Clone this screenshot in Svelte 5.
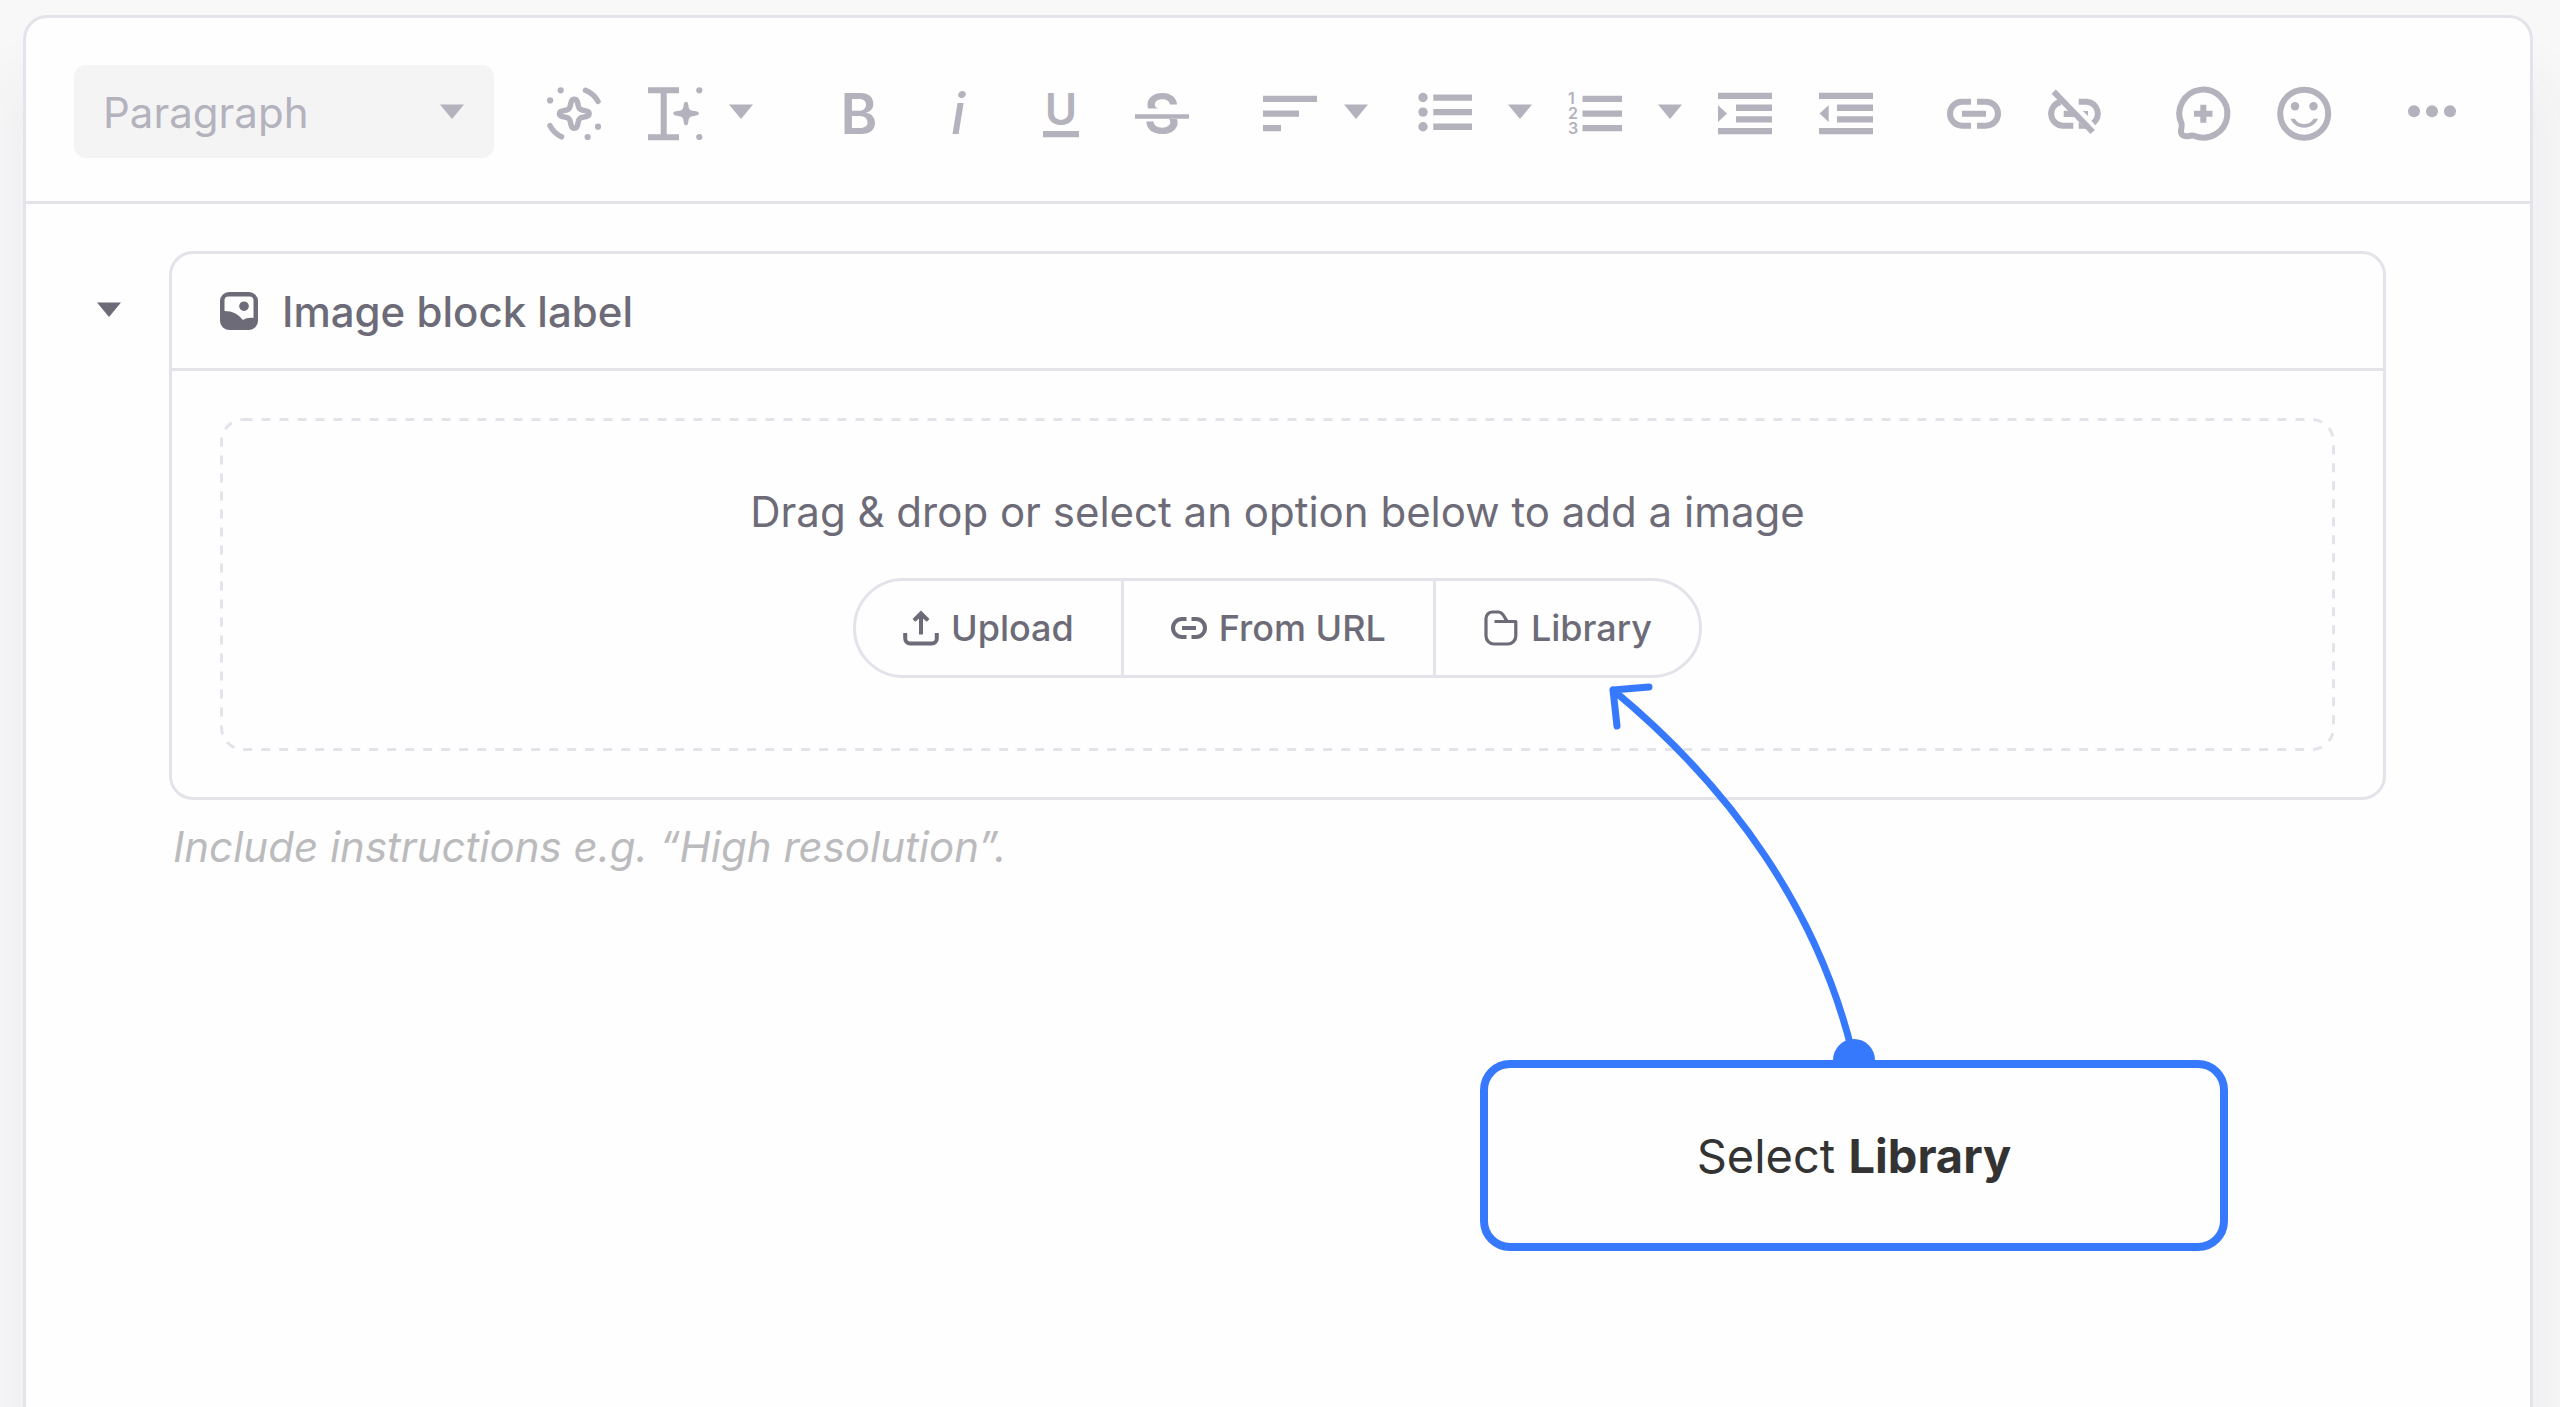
<script>
    let style = $state('Paragraph');
    let open = $state(true);

    const styles = ['Paragraph', 'Heading 1', 'Heading 2', 'Heading 3'];
</script>

{#snippet caret()}
    <svg class="caret" viewBox="0 0 24 15" aria-hidden="true"><path d="M0 0.5h24L12 15z" /></svg>
{/snippet}

{#snippet menu(label)}
    <button class="menu" aria-label={label}>{@render caret()}</button>
{/snippet}

<main>
    <section class="panel">
        <div class="toolbar" role="toolbar" aria-label="Formatting">
            <label class="picker">
                <select bind:value={style} aria-label="Text style">
                    {#each styles as name}
                        <option>{name}</option>
                    {/each}
                </select>
                {@render caret()}
            </label>

            <div class="group assist">
                <button class="tool" aria-label="AI assist">
                    <svg viewBox="0 0 54 59">
                        <g class="line round">
                            <path d="M38.5 8.3A26 26 0 0 1 51 19.3M3 43.7A26 26 0 0 0 14.5 54.8" />
                            <path d="M27.3 17.2c2.6 0 3.2 2.6 3.9 6.2.7 3.3 1.6 4.2 4.6 4.8 3.6.8 6.3 1.1 6.3 3.5s-2.7 2.8-6.3 3.6c-3 .6-3.9 1.5-4.6 4.8-.7 3.6-1.3 6.2-3.9 6.2s-3.2-2.6-3.9-6.2c-.7-3.3-1.6-4.2-4.6-4.8-3.6-.8-6.3-1.2-6.3-3.6s2.7-2.7 6.3-3.5c3-.6 3.9-1.5 4.6-4.8.7-3.6 1.3-6.2 3.9-6.2z" />
                        </g>
                        <circle cx="13.7" cy="8.3" r="3.1" />
                        <circle cx="3.1" cy="18.4" r="3.1" />
                        <circle cx="51" cy="44.7" r="3.1" />
                        <circle cx="40.6" cy="55" r="3.1" />
                    </svg>
                </button>
                <div class="split">
                    <button class="tool" aria-label="Insert text with AI">
                        <svg viewBox="0 0 54 59">
                            <path d="M0 5.3h31v6H18.7v41H31v6H0v-6h12.7v-41H0z" />
                            <path d="M38 19.8c1.4 0 2 1 2.3 3.2.6 4.6 1.3 5.4 5.8 6 3.2.4 4.8 1 4.8 2.4s-1.6 2-4.8 2.5c-4.5.6-5.2 1.3-5.8 6-.3 2.3-.9 3.4-2.3 3.4s-2-1.1-2.3-3.4c-.6-4.7-1.3-5.4-5.8-6-3.2-.5-4.6-1.1-4.6-2.5s1.4-2 4.6-2.4c4.5-.6 5.2-1.4 5.8-6 .3-2.2.9-3.2 2.3-3.2z" />
                            <circle cx="51.3" cy="8.3" r="3.1" />
                            <circle cx="51.3" cy="55" r="3.1" />
                        </svg>
                    </button>
                    {@render menu('More AI options')}
                </div>
            </div>

            <div class="group marks">
                <button class="tool" aria-label="Bold">
                    <svg viewBox="0 0 54 59"><text x="27" y="52" class="glyph">B</text></svg>
                </button>
                <button class="tool" aria-label="Italic">
                    <svg viewBox="0 0 54 59"><text x="25" y="52" class="glyph italic">i</text></svg>
                </button>
                <button class="tool" aria-label="Underline">
                    <svg viewBox="0 0 54 59">
                        <text x="27" y="43" class="glyph under">U</text>
                        <path d="M9 49h36v6.3H9z" />
                    </svg>
                </button>
                <button class="tool" aria-label="Strikethrough">
                    <svg viewBox="0 0 54 59">
                        <text x="27" y="52" class="glyph">S</text>
                        <path class="gap" d="M6 26.5h42V37H6z" />
                        <path d="M0 32.3h54v4.4H0z" />
                    </svg>
                </button>
            </div>

            <div class="group">
                <div class="split">
                    <button class="tool" aria-label="Align">
                        <svg viewBox="0 0 54 59"><path d="M0 13.7h54V20H0zM0 28.4h36v6.3H0zM0 43h18v6.3H0z" /></svg>
                    </button>
                    {@render menu('Alignment options')}
                </div>
            </div>

            <div class="group lists">
                <button class="tool" aria-label="Bulleted list">
                    <svg viewBox="0 0 54 59">
                        <circle cx="5" cy="15.5" r="4.7" />
                        <circle cx="5" cy="30.1" r="4.7" />
                        <circle cx="5" cy="44.7" r="4.7" />
                        <path d="M15.3 12.4H54v6.3H15.3zM15.3 27H54v6.3H15.3zM15.3 41.6H54v6.3H15.3z" />
                    </svg>
                </button>
                {@render menu('Bulleted list options')}
                <button class="tool" aria-label="Numbered list">
                    <svg viewBox="0 0 54 59">
                        <text x="0" y="22" class="digit">1</text>
                        <text x="0" y="37" class="digit">2</text>
                        <text x="0" y="52" class="digit">3</text>
                        <path d="M14.5 13.7H54V20H14.5zM14.5 28.4H54v6.3H14.5zM14.5 43H54v6.3H14.5z" />
                    </svg>
                </button>
                {@render menu('Numbered list options')}
                <div class="group indents">
                    <button class="tool" aria-label="Increase indent">
                        <svg viewBox="0 0 54 59"><path d="M0 10.8h54v6.3H0zM18 22.6h36v6.3H18zM18 34.3h36v6.3H18zM0 46h54v6.3H0zM0 23.3l9 8.3-9 8.4z" /></svg>
                    </button>
                    <button class="tool" aria-label="Decrease indent">
                        <svg viewBox="0 0 54 59"><path d="M0 10.8h54v6.3H0zM18 22.6h36v6.3H18zM18 34.3h36v6.3H18zM0 46h54v6.3H0zM9.7 23.3L.5 31.6l9.2 8.4z" /></svg>
                    </button>
                </div>
            </div>

            <div class="group">
                <button class="tool" aria-label="Insert link">
                    <svg viewBox="0 0 54 59">
                        <path class="line" d="M24 19.7h-9a12 12 0 0 0 0 24h9M30 19.7h9a12 12 0 0 1 0 24h-9M15 31.7h24" />
                    </svg>
                </button>
                <button class="tool" aria-label="Remove link">
                    <svg viewBox="0 0 54 59">
                        <path class="line" d="M12.5 20a12 12 0 0 0 2.5 23.7h10.3M30.7 19.7H39a12 12 0 0 1 6.3 21.3" />
                        <path class="line" d="M5.7 9.7l39 40.3" />
                        <path d="M15.7 28.7h9l6 6.3h-15zM34.7 29H40v5zM30.7 40.3l8.3 6.4h-8.3z" />
                    </svg>
                </button>
            </div>

            <div class="group">
                <button class="tool" aria-label="Add comment">
                    <svg viewBox="0 0 54 59">
                        <path class="line" d="M5.5 41.5A24 24 0 1 1 18 53.7c-1.5-.6-2.5-.3-4 .1-5 1.3-9.5 0-9-5.3.2-2.5 1.4-4.5.5-7z" />
                        <path class="line" d="M18 31.7h18.5M27.3 22.7v18" />
                    </svg>
                </button>
                <button class="tool" aria-label="Insert emoji">
                    <svg viewBox="0 0 54 59">
                        <circle class="line" cx="27.2" cy="31.7" r="24" />
                        <circle cx="18" cy="24.3" r="4.2" />
                        <circle cx="36.5" cy="24.3" r="4.2" />
                        <path d="M13.5 36.7h4.3c1.9 3.3 5.3 5.4 9.4 5.4s7.5-2.1 9.4-5.4h4.3c-2.2 5.4-7.5 9-13.7 9s-11.5-3.6-13.7-9z" />
                    </svg>
                </button>
            </div>

            <div class="group">
                <button class="tool" aria-label="More">
                    <svg viewBox="0 0 54 59">
                        <circle cx="9" cy="29.3" r="6" />
                        <circle cx="27" cy="29.3" r="6" />
                        <circle cx="45" cy="29.3" r="6" />
                    </svg>
                </button>
            </div>
        </div>

        <div class="content">
            <button class="menu toggle" aria-label="Toggle block" aria-expanded={open} onclick={() => (open = !open)}>
                {@render caret()}
            </button>
            <div class="field">
                <div class="block">
                    <header>
                        <svg class="image-icon" viewBox="0 0 38 38" aria-hidden="true">
                            <path fill-rule="evenodd" d="M9 0h20a9 9 0 0 1 9 9v20a9 9 0 0 1-9 9H9a9 9 0 0 1-9-9V9a9 9 0 0 1 9-9zM8.5 4.5a4 4 0 0 0-4 4V19c8 0 13.5 3 18.5 9 3-2 6.5-2.5 10.5-2V8.5a4 4 0 0 0-4-4z" />
                            <circle cx="24" cy="14.2" r="4.8" />
                        </svg>
                        <h2>Image block label</h2>
                    </header>
                    {#if open}
                        <div class="body">
                            <div class="dropzone">
                                <svg class="dashes" aria-hidden="true"><rect rx="22" /></svg>
                                <p>Drag &amp; drop or select an option below to add a image</p>
                                <div class="sources">
                                    <button>
                                        <svg viewBox="0 0 36 36" aria-hidden="true">
                                            <path class="line bold" d="M2.2 23v5.5a5 5 0 0 0 5 5h21.6a5 5 0 0 0 5-5V23M18 24.5V4" />
                                            <path d="M18 .5l8.500 8.500-2.700 2.700L18 7l-5.800 4.700L9.500 9z" />
                                        </svg>
                                        Upload
                                    </button>
                                    <button>
                                        <svg viewBox="0 0 36 36" aria-hidden="true">
                                            <path class="line bold" d="M15.5 9H11a9 9 0 0 0 0 18h4.5M20.5 9H25a9 9 0 0 1 0 18h-4.5M11 18h14" />
                                        </svg>
                                        From URL
                                    </button>
                                    <button>
                                        <svg viewBox="0 0 36 36" aria-hidden="true">
                                            <path class="line thin" d="M11.5 11.5h21.3V26a8 8 0 0 1-8 8H11a8 8 0 0 1-8-8V8.5A6.5 6.5 0 0 1 9.5 2h6c4.5 0 5.5 5 8.5 9" />
                                        </svg>
                                        Library
                                    </button>
                                </div>
                            </div>
                        </div>
                    {/if}
                </div>
                <p class="hint">Include instructions e.g. “High resolution”.</p>
            </div>
        </div>
    </section>

    <aside class="callout">
        <svg class="arrow" viewBox="0 0 270 380" aria-hidden="true">
            <path d="M7 9C129 110 212 232 246 370M43 6L7 9l4 36" />
            <circle cx="248" cy="379" r="21" />
        </svg>
        <p>Select <b>Library</b></p>
    </aside>
</main>

<style>
    :global(body) {
        background: #f8f8f8;
    }

    main {
        position: relative;
        box-sizing: border-box;
        min-height: 100vh;
        padding: 15px 27px 0 23px;
        display: flex;
        overflow: hidden;
        font-family: Inter, "Liberation Sans", sans-serif;
        color: #6d6b77;
    }

    button, select {
        margin: 0;
        padding: 0;
        border: 0;
        background: none;
        font: inherit;
        color: inherit;
        cursor: pointer;
    }

    svg {
        display: block;
        flex: none;
        fill: currentColor;
    }

    p, h2 {
        margin: 0;
    }

    .panel {
        flex: 1;
        border: 3px solid #e4e3ea;
        border-bottom: 0;
        border-radius: 24px 24px 0 0;
        background: #fefefe;
        box-shadow: 0 72px 60px 16px rgba(60, 60, 110, 0.05);
    }

    /* toolbar */
    .toolbar {
        display: flex;
        align-items: center;
        padding: 47px 48px 43px;
        border-bottom: 3px solid #e4e3ea;
        color: #b3b2bd;
    }

    .picker {
        position: relative;
        flex: none;
        width: 420px;
        height: 93px;
    }

    .picker select {
        appearance: none;
        width: 100%;
        height: 100%;
        padding: 2px 72px 0 29px;
        border-radius: 12px;
        background: #f4f4f5;
        font-size: 42px;
    }

    .picker .caret {
        position: absolute;
        top: 39px;
        right: 30px;
        pointer-events: none;
    }

    .caret {
        width: 24px;
        height: 15px;
    }

    .group {
        display: flex;
        align-items: center;
        gap: 47px;
        margin-left: 74px;
    }

    .assist {
        margin-left: 53px;
    }

    .marks {
        margin-left: 79px;
    }

    .lists {
        gap: 36px;
        margin-left: 50px;
    }

    .indents {
        margin-left: 0;
    }

    .split {
        display: flex;
        align-items: center;
        gap: 27px;
    }

    .tool svg {
        width: 54px;
        height: 59px;
        overflow: visible;
    }

    .line {
        fill: none;
        stroke: currentColor;
        stroke-width: 6;
    }

    .round {
        stroke-width: 5.5;
        stroke-linecap: round;
        stroke-linejoin: round;
    }

    .gap {
        fill: #fefefe;
    }

    .glyph {
        font-size: 56px;
        font-weight: 600;
        text-anchor: middle;
    }

    .italic {
        font-style: italic;
        font-weight: 500;
    }

    .under {
        font-size: 44px;
    }

    .digit {
        font-size: 16px;
        font-weight: 600;
    }

    /* image block */
    .content {
        display: flex;
        align-items: flex-start;
        gap: 48px;
        padding: 47px 144px 48px 71px;
    }

    .toggle {
        margin-top: 51px;
    }

    .field {
        flex: 1;
    }

    .block {
        border: 3px solid #e4e3ea;
        border-radius: 24px;
    }

    .block header {
        display: flex;
        align-items: center;
        gap: 24px;
        height: 114px;
        padding: 0 48px;
        border-bottom: 3px solid #e4e3ea;
    }

    .image-icon {
        width: 38px;
        height: 38px;
    }

    h2 {
        padding-top: 2px;
        font-size: 42px;
        font-weight: 500;
        line-height: 56px;
    }

    .body {
        padding: 47px 48px 46px;
    }

    .dropzone {
        position: relative;
        display: flex;
        flex-direction: column;
        align-items: center;
        gap: 38px;
        padding: 66px 48px 73px;
    }

    .dropzone p {
        font-size: 42px;
        line-height: 56px;
    }

    .dashes {
        position: absolute;
        inset: 0;
        width: 100%;
        height: 100%;
    }

    .dashes rect {
        x: 1.5px;
        y: 1.5px;
        width: calc(100% - 3px);
        height: calc(100% - 3px);
        fill: none;
        stroke: #e4e3ea;
        stroke-width: 3;
        stroke-dasharray: 9 9;
    }

    .sources {
        position: relative;
        display: flex;
        border: 3px solid #e4e3ea;
        border-radius: 50px;
    }

    .sources button {
        display: flex;
        align-items: center;
        gap: 12px;
        height: 94px;
        padding: 0 47px;
        font-size: 36px;
        font-weight: 500;
    }

    .sources button + button {
        border-left: 3px solid #e4e3ea;
    }

    .sources svg {
        width: 36px;
        height: 36px;
    }

    .bold {
        stroke-width: 4;
    }

    .thin {
        stroke-width: 3.2;
        stroke-linejoin: round;
    }

    .hint {
        margin-top: 19px;
        padding-left: 4px;
        font-size: 42px;
        font-style: italic;
        line-height: 56px;
        color: #bbbbbd;
    }

    /* callout with its arrow, pinned over the editor */
    .callout {
        position: absolute;
        top: 1060px;
        left: calc(50% + 200px);
        width: 748px;
        box-sizing: border-box;
        padding: 59px 24px;
        border: 8px solid #3679fc;
        border-radius: 30px;
        background: #fefefe;
        color: #333;
        font-size: 47px;
        line-height: 57px;
        text-align: center;
    }

    .arrow {
        position: absolute;
        right: 344px;
        bottom: 100%;
        width: 270px;
        height: 380px;
        margin-bottom: 7px;
        color: #3679fc;
    }

    .arrow path {
        fill: none;
        stroke: currentColor;
        stroke-width: 7;
        stroke-linecap: round;
        stroke-linejoin: round;
    }
</style>
